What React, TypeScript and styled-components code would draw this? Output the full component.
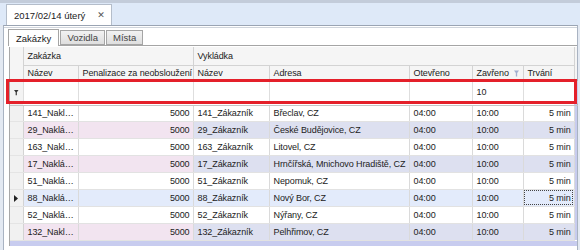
import React from "react";
import styled, { createGlobalStyle } from "styled-components";

const FONT = `"Liberation Sans", Arial, sans-serif`;

const Global = createGlobalStyle`
  html, body { margin: 0; padding: 0; background: #ffffff; }
  body { font-family: ${FONT}; }
`;

const Root = styled.div`
  position: relative;
  width: 580px;
  height: 250px;
  overflow: hidden;
  display: flex;
  flex-direction: column;
  background: #e3e9f2;
  font-family: ${FONT};
  font-size: 9px;
  color: #222;
`;

const TopStrip = styled.div`
  height: 22px;
  border-top: 3px solid #c3ccda;
  background: #dee9f8;
  display: flex;
  align-items: flex-end;
  padding-left: 6px;
`;

const DocTab = styled.div`
  height: 20px;
  background: #fff;
  border: 1px solid #b4bdca;
  border-bottom: none;
  display: flex;
  align-items: center;
  padding: 0 6px 0 7px;
  gap: 12px;
  font-size: 9.5px;
  color: #222;
  white-space: nowrap;
`;

const Close = styled.span`
  font-family: "DejaVu Sans", sans-serif;
  font-size: 9px;
  font-weight: bold;
  color: #555;
`;

const Panel = styled.div`
  flex: 1;
  margin: 0 2px 0 3px;
  background: #fff;
  border-left: 1px solid #a9b3c2;
  border-right: 1px solid #a9b3c2;
  border-top: 1px solid #9aa4b3;
  box-shadow: inset 0 1px 0 #ffffff, inset 0 2px 0 #d0d5dc;
  padding: 2px 0 0 4px;
  display: flex;
  flex-direction: column;
`;

const TabStrip = styled.div`
  height: 17px;
  display: flex;
  align-items: flex-end;
  border-bottom: 1px solid #a5a5a5;
`;

const Tab = styled.div<{ $active?: boolean }>`
  height: ${(p) => (p.$active ? 17 : 15)}px;
  margin-bottom: ${(p) => (p.$active ? -1 : 0)}px;
  margin-right: 1px;
  padding: 0 ${(p) => (p.$active ? 7 : 6)}px;
  display: flex;
  align-items: center;
  border: 1px solid #a5a5a5;
  border-bottom: ${(p) => (p.$active ? "none" : "1px solid #a5a5a5")};
  background: ${(p) => (p.$active ? "#ffffff" : "linear-gradient(#f2f2f2, #dedede)")};
  color: ${(p) => (p.$active ? "#222" : "#444")};
  box-sizing: border-box;
  font-size: 9.5px;
`;

const GridFrame = styled.div`
  margin: 1px 0 0 1px;
  border-left: 1px solid #a8a8a8;
  display: flex;
  flex-direction: column;
`;

const Table = styled.table`
  border-collapse: collapse;
  table-layout: fixed;
  width: 567px;
  font-family: ${FONT};
  font-size: 9px;
  letter-spacing: -0.1px;
`;

const HeadCell = styled.th<{ $filler?: boolean; $h?: number }>`
  height: ${(p) => p.$h ?? 16}px;
  padding: 0 3px 0 4px;
  text-align: left;
  font-weight: normal;
  color: #222;
  background: #f5f5f5;
  border-right: 1px solid ${(p) => (p.$filler ? "transparent" : "#d3d3d3")};
  border-bottom: 1px solid #d3d3d3;
  white-space: nowrap;
  overflow: hidden;
  box-sizing: border-box;
`;

const HeadInner = styled.span`
  display: flex;
  align-items: center;
  gap: 5px;
`;

const FilterCell = styled.td<{ $filler?: boolean; $indicator?: boolean }>`
  height: 23px;
  padding: 0 4px;
  background: ${(p) => (p.$filler ? "#c8ccef" : p.$indicator ? "#f3f3f3" : "#ffffff")};
  border-right: 1px solid ${(p) => (p.$filler ? "#c8ccef" : "#dedede")};
  border-bottom: 3px double #c4c4c4;
  white-space: nowrap;
  box-sizing: border-box;
`;

type Tone = "odd" | "even" | "sel";

const bg = (tone: Tone, group: "a" | "b") => {
  if (tone === "sel") return "#e3ebfb";
  if (tone === "even") return group === "a" ? "#f2e4f0" : "#dde0f0";
  return "#ffffff";
};

const Cell = styled.td<{ $tone: Tone; $group: "a" | "b"; $right?: boolean; $focus?: boolean }>`
  height: 17px;
  padding: 0 3px 0 4px;
  background: ${(p) => bg(p.$tone, p.$group)};
  border-right: 1px solid #dadada;
  border-bottom: 1px solid #e2e2e2;
  text-align: ${(p) => (p.$right ? "right" : "left")};
  white-space: nowrap;
  overflow: hidden;
  text-overflow: ellipsis;
  box-sizing: border-box;
  color: #222;
  outline: ${(p) => (p.$focus ? "1px dotted #444" : "none")};
  outline-offset: -2px;
`;

const IndicatorCell = styled.td`
  height: 17px;
  padding: 0;
  background: #f1f1f1;
  border-right: 1px solid #d3d3d3;
  border-bottom: 1px solid #e4e4e4;
  text-align: center;
  box-sizing: border-box;
`;

const FillerCell = styled.td`
  padding: 0;
  background: #c8ccef;
  border: none;
`;

const BottomBand = styled.div`
  height: 5px;
  background: #c8ccef;
`;

const Highlight = styled.div`
  position: absolute;
  left: 6px;
  top: 79px;
  width: 571px;
  height: 25px;
  border: 3px solid #e4202a;
  box-sizing: border-box;
  pointer-events: none;
`;

const Centered = styled.span`
  display: flex;
  justify-content: center;
`;

const FilterIcon = ({ color }: { color: string }) => (
  <svg width="5" height="7" viewBox="0 0 6 7" style={{ display: "block" }}>
    <path d="M0 0h6L3.8 3v4H2.2V3z" fill={color} />
  </svg>
);

const Arrow = () => (
  <svg width="4" height="7" viewBox="0 0 4 7" style={{ display: "inline-block", verticalAlign: "middle" }}>
    <path d="M0 0l4 3.5L0 7z" fill="#222" />
  </svg>
);

type Row = { id: string; addr: string };
const rows: Row[] = [
  { id: "141", addr: "Břeclav, CZ" },
  { id: "29", addr: "České Budějovice, CZ" },
  { id: "163", addr: "Litovel, CZ" },
  { id: "17", addr: "Hrnčířská, Mnichovo Hradiště, CZ" },
  { id: "51", addr: "Nepomuk, CZ" },
  { id: "88", addr: "Nový Bor, CZ" },
  { id: "52", addr: "Nýřany, CZ" },
  { id: "132", addr: "Pelhřimov, CZ" },
];

const widths = [13, 55, 115, 76, 140, 63, 51, 51, 3];

export default function App() {
  return (
    <>
      <Global />
      <Root>
        <TopStrip>
          <DocTab>
            <span>2017/02/14 úterý</span>
            <Close>✕</Close>
          </DocTab>
        </TopStrip>
        <Panel>
          <TabStrip>
            <Tab $active>Zakázky</Tab>
            <Tab>Vozidla</Tab>
            <Tab>Místa</Tab>
          </TabStrip>
          <GridFrame>
            <Table>
              <colgroup>
                {widths.map((w, i) => (
                  <col key={i} style={{ width: w }} />
                ))}
              </colgroup>
              <thead>
                <tr>
                  <HeadCell rowSpan={2} />
                  <HeadCell colSpan={2} $h={18}>
                    Zakázka
                  </HeadCell>
                  <HeadCell colSpan={5} $h={18}>
                    Vykládka
                  </HeadCell>
                  <HeadCell rowSpan={2} $filler />
                </tr>
                <tr>
                  <HeadCell>Název</HeadCell>
                  <HeadCell>Penalizace za neobsloužení</HeadCell>
                  <HeadCell>Název</HeadCell>
                  <HeadCell>Adresa</HeadCell>
                  <HeadCell>Otevřeno</HeadCell>
                  <HeadCell>
                    <HeadInner>
                      <span>Zavřeno</span>
                      <FilterIcon color="#a3afcf" />
                    </HeadInner>
                  </HeadCell>
                  <HeadCell>Trvání</HeadCell>
                </tr>
              </thead>
              <tbody>
                <tr>
                  <FilterCell $indicator>
                    <Centered>
                      <FilterIcon color="#333" />
                    </Centered>
                  </FilterCell>
                  <FilterCell />
                  <FilterCell />
                  <FilterCell />
                  <FilterCell />
                  <FilterCell />
                  <FilterCell>10</FilterCell>
                  <FilterCell />
                  <FilterCell $filler />
                </tr>
                {rows.map((r, i) => {
                  const tone: Tone = r.id === "88" ? "sel" : i % 2 === 1 ? "even" : "odd";
                  return (
                    <tr key={r.id}>
                      <IndicatorCell>{r.id === "88" ? <Arrow /> : null}</IndicatorCell>
                      <Cell $tone={tone} $group="a">{`${r.id}_Nakládka`}</Cell>
                      <Cell $tone={tone} $group="a" $right>
                        5000
                      </Cell>
                      <Cell $tone={tone} $group="b">{`${r.id}_Zákazník`}</Cell>
                      <Cell $tone={tone} $group="b">{r.addr}</Cell>
                      <Cell $tone={tone} $group="b">04:00</Cell>
                      <Cell $tone={tone} $group="b">10:00</Cell>
                      <Cell $tone={tone} $group="b" $right $focus={r.id === "88"}>
                        5 min
                      </Cell>
                      <FillerCell />
                    </tr>
                  );
                })}
              </tbody>
            </Table>
            <BottomBand />
          </GridFrame>
        </Panel>
        <Highlight />
      </Root>
    </>
  );
}
